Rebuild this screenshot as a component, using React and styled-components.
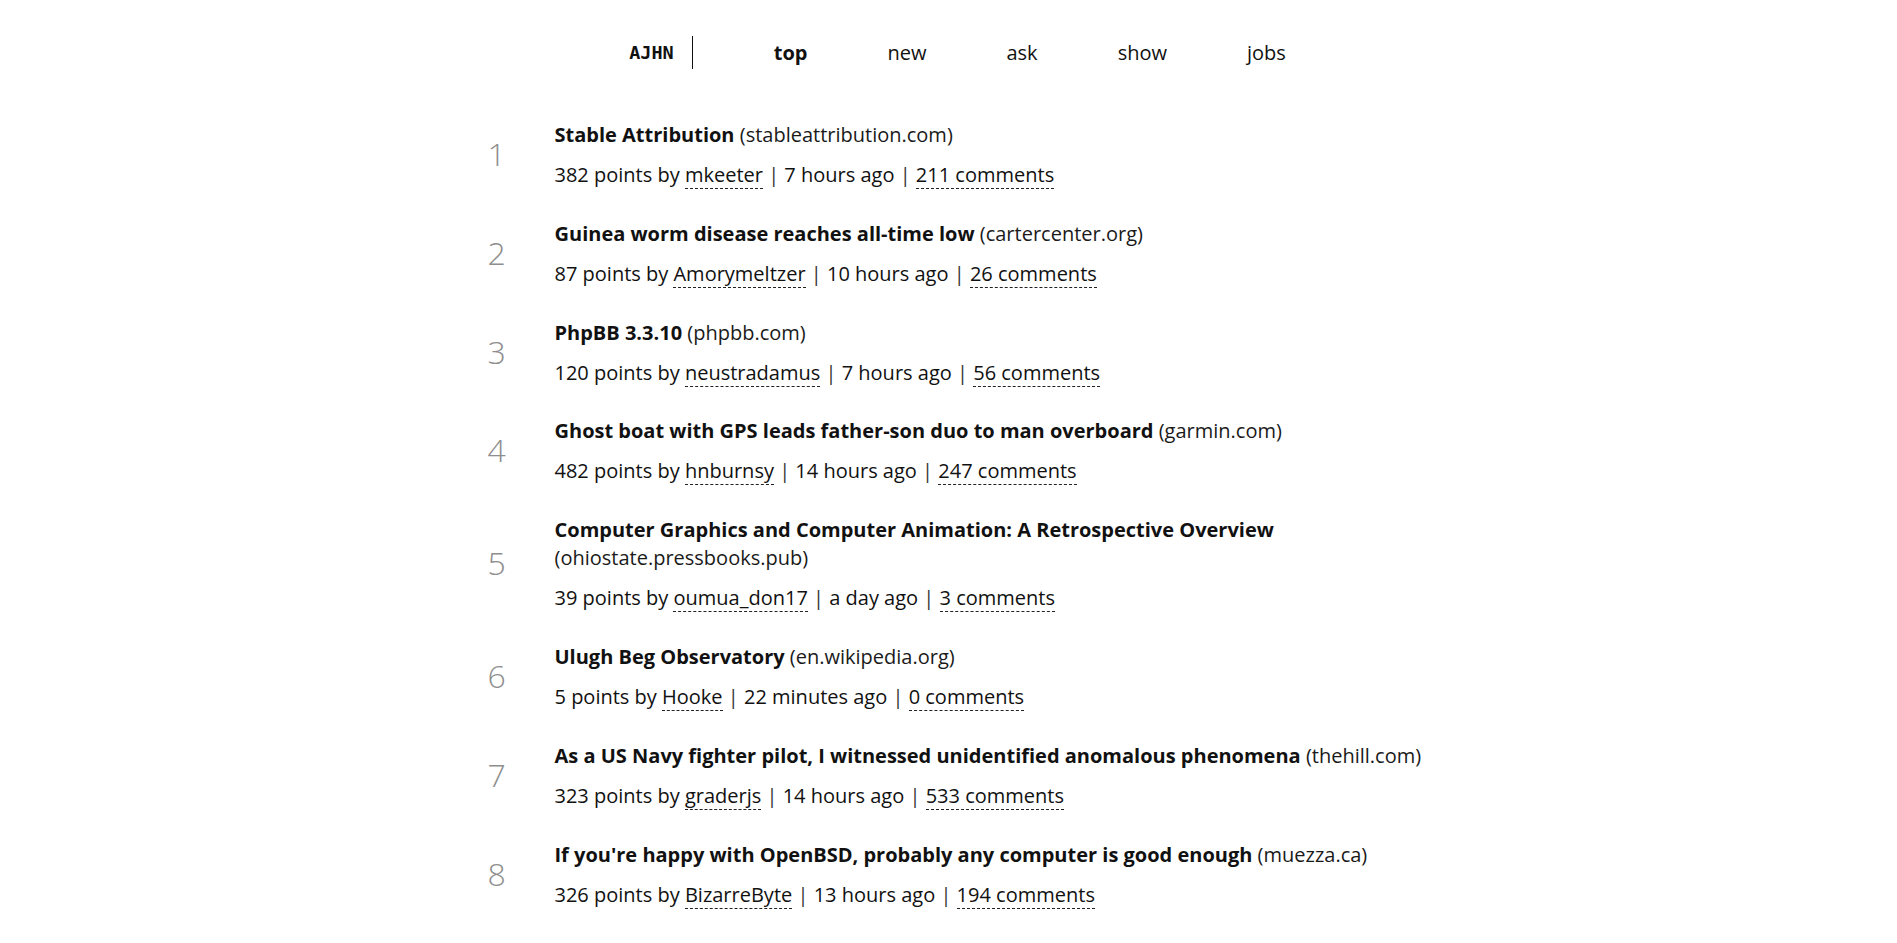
import React from "react";
import styled, { createGlobalStyle } from "styled-components";

const GlobalStyle = createGlobalStyle`
  html, body {
    margin: 0;
    padding: 0;
    background: #ffffff;
  }
  body {
    font-family: "Open Sans", "Noto Sans", sans-serif;
    color: #111111;
  }
`;

const stories = [
  { title: "Stable Attribution", domain: "stableattribution.com", points: 382, user: "mkeeter", time: "7 hours ago", comments: 211 },
  { title: "Guinea worm disease reaches all-time low", domain: "cartercenter.org", points: 87, user: "Amorymeltzer", time: "10 hours ago", comments: 26 },
  { title: "PhpBB 3.3.10", domain: "phpbb.com", points: 120, user: "neustradamus", time: "7 hours ago", comments: 56 },
  { title: "Ghost boat with GPS leads father-son duo to man overboard", domain: "garmin.com", points: 482, user: "hnburnsy", time: "14 hours ago", comments: 247 },
  { title: "Computer Graphics and Computer Animation: A Retrospective Overview", domain: "ohiostate.pressbooks.pub", points: 39, user: "oumua_don17", time: "a day ago", comments: 3 },
  { title: "Ulugh Beg Observatory", domain: "en.wikipedia.org", points: 5, user: "Hooke", time: "22 minutes ago", comments: 0 },
  { title: "As a US Navy fighter pilot, I witnessed unidentified anomalous phenomena", domain: "thehill.com", points: 323, user: "graderjs", time: "14 hours ago", comments: 533 },
  { title: "If you're happy with OpenBSD, probably any computer is good enough", domain: "muezza.ca", points: 326, user: "BizarreByte", time: "13 hours ago", comments: 194 },
];

const navItems = ["top", "new", "ask", "show", "jobs"];

const Header = styled.header`
  display: flex;
  justify-content: center;
  padding: 36px 0 0 58px;
`;

const HeaderInner = styled.nav`
  display: flex;
  align-items: center;
  height: 33px;
`;

const Logo = styled.a`
  font-family: "DejaVu Sans Mono", "Liberation Mono", monospace;
  font-weight: bold;
  font-size: 18.5px;
  color: #111;
  text-decoration: none;
  padding-right: 18px;
  line-height: 33px;
`;

const Divider = styled.span`
  width: 1px;
  align-self: stretch;
  background: #111;
  margin-right: 41px;
`;

const NavLink = styled.a`
  font-size: 20px;
  line-height: 33px;
  padding: 0 40px;
  color: #111;
  text-decoration: none;
  font-weight: ${(p) => (p.$active ? 700 : 400)};
`;

const List = styled.main`
  width: 960px;
  margin: 52px auto 0;
  display: flex;
  flex-direction: column;
  gap: 30.8px;
`;

const Item = styled.article`
  display: grid;
  grid-template-columns: 86px 1fr;
  align-items: center;
`;

const Rank = styled.div`
  font-size: 32px;
  font-weight: 300;
  color: #8e8e8e;
  padding-left: 19px;
  line-height: 1;
  margin-top: -2px;
`;

const Body = styled.div`
  display: flex;
  flex-direction: column;
  gap: 12px;
`;

const TitleLine = styled.div`
  font-size: 20px;
  line-height: 28px;
`;

const Title = styled.a`
  font-weight: 700;
  color: #111;
  text-decoration: none;
`;

const Domain = styled.span`
  color: #1a1a1a;
`;

const Meta = styled.div`
  font-size: 20px;
  line-height: 28px;
  color: #111;
`;

const Dotted = styled.a`
  color: #111;
  text-decoration: none;
  border-bottom: 1px dashed #222;
`;

const Sep = styled.span`
  color: #333;
`;

export default function App() {
  return (
    <>
      <GlobalStyle />
      <Header>
        <HeaderInner>
          <Logo href="#">AJHN</Logo>
          <Divider />
          {navItems.map((n, i) => (
            <NavLink key={n} href="#" $active={i === 0}>
              {n}
            </NavLink>
          ))}
        </HeaderInner>
      </Header>
      <List>
        {stories.map((s, i) => (
          <Item key={i}>
            <Rank>{i + 1}</Rank>
            <Body>
              <TitleLine>
                <Title href="#">{s.title}</Title> <Domain>({s.domain})</Domain>
              </TitleLine>
              <Meta>
                {s.points} points by <Dotted href="#">{s.user}</Dotted> <Sep>|</Sep> {s.time}{" "}
                <Sep>|</Sep> <Dotted href="#">{s.comments} comments</Dotted>
              </Meta>
            </Body>
          </Item>
        ))}
      </List>
    </>
  );
}
